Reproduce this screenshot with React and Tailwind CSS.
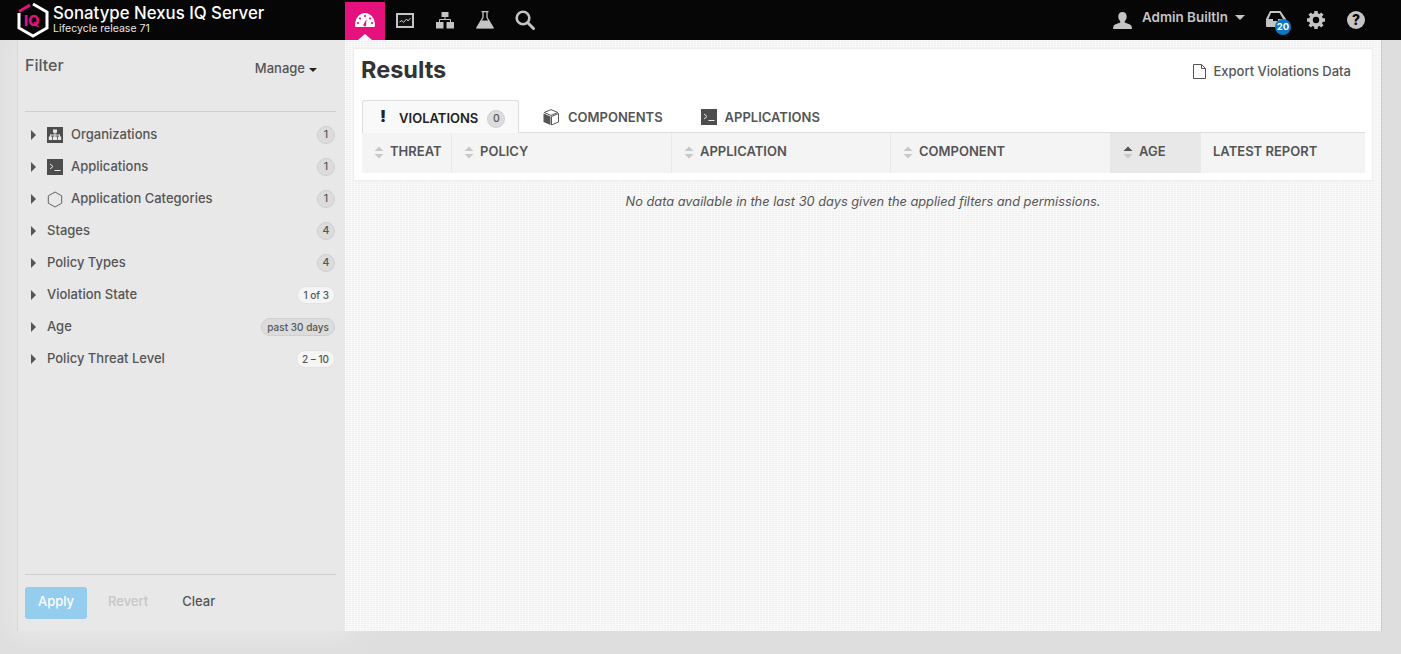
const font = "font-['Inter','Liberation_Sans',sans-serif]";

const Caret = () => (
  <svg width="7" height="10" viewBox="0 0 7 10" className="shrink-0"><path d="M1 0l5 5-5 5z" fill="#555" /></svg>
);

const OrgIcon = () => (
  <svg width="16" height="16" viewBox="0 0 16 16" className="shrink-0">
    <rect width="16" height="16" fill="#4d4d4d" />
    <path d="M6 2.500h4v3.200H8.500V7.500H13V9.500h1.200v3.500h-3.400V9.500H12V8.500H8.500v1H10V13H6V9.500h1.500v-1H4v1h1.200V13H1.800V9.500H3v-2h4.500V5.700H6z" fill="#e8e8e8" />
  </svg>
);

const TermIcon = () => (
  <svg width="16" height="16" viewBox="0 0 16 16" className="shrink-0">
    <rect width="16" height="16" fill="#4d4d4d" />
    <path d="M3 5l3 2.500L3 10" fill="none" stroke="#e8e8e8" strokeWidth="1" />
    <path d="M7.500 11.500h6" stroke="#e8e8e8" strokeWidth="1" />
  </svg>
);

const HexIcon = () => (
  <svg width="16" height="17" viewBox="0 0 16 17" className="shrink-0">
    <path d="M8 1l6.700 3.800v7.400L8 16l-6.700-3.800V4.800z" fill="none" stroke="#555" strokeWidth="0.9" />
  </svg>
);

const Logo = () => (
  <svg width="34" height="38" viewBox="0 0 34 38" className="shrink-0">
    <path d="M17 3l14 8v16l-14 8-14-8V12" fill="none" stroke="#fff" strokeWidth="3" />
    <path d="M3 10.500L14 4" stroke="#e5127d" strokeWidth="3" />
    <text x="8" y="25" fontSize="14.500" fontWeight="800" fill="#e5127d" fontFamily="Inter, sans-serif">IQ</text>
  </svg>
);

const Gauge = () => (
  <svg width="20" height="16" viewBox="0 0 20 16">
    <path d="M0 13.500C0 6 4.500 1 10 1s10 5 10 12.500c0 .8-.5 1.500-1.200 1.500H1.200C.500 15 0 14.300 0 13.500z" fill="#fff" />
    <g fill="#e5127d">
      <circle cx="3" cy="11" r="1.100" />
      <circle cx="5" cy="6.500" r="1.100" />
      <circle cx="10" cy="4" r="1.100" />
      <circle cx="15" cy="6.500" r="1.100" />
      <circle cx="17" cy="11" r="1.100" />
      <path d="M8.500 12.500l3-5.500-.5 6.500a1.300 1.300 0 1 1-2.500-1z" />
    </g>
  </svg>
);

const Chart = () => (
  <svg width="18" height="15" viewBox="0 0 18 15">
    <rect x="1" y="1" width="16" height="13" fill="#111" stroke="#c4c4c4" strokeWidth="2" />
    <path d="M3.500 9l2.500-1.500L7.500 9.500l3-3.500 1.500 2L14.500 5" fill="none" stroke="#c4c4c4" strokeWidth="1" />
  </svg>
);

const Org = () => (
  <svg width="18" height="17" viewBox="0 0 18 17">
    <rect x="5.500" y="0" width="7" height="5" fill="#c4c4c4" />
    <rect x="0" y="10" width="7.500" height="6.500" fill="#c4c4c4" />
    <rect x="10.500" y="10" width="7.500" height="6.500" fill="#c4c4c4" />
    <path d="M9 5v2.500M3.500 10V7.500h11V10" fill="none" stroke="#c4c4c4" strokeWidth="1" />
  </svg>
);

const Flask = () => (
  <svg width="18" height="18" viewBox="0 0 18 18">
    <path d="M5.500 0.700h7M7 1v5.500L1 16.500h16l-6-10V1" fill="none" stroke="#c4c4c4" strokeWidth="1.300" />
    <path d="M5 9.500h8L17.500 17.500H.5z" fill="#c4c4c4" />
  </svg>
);

const Search = () => (
  <svg width="20" height="20" viewBox="0 0 20 20">
    <circle cx="8" cy="8" r="6.300" fill="none" stroke="#c4c4c4" strokeWidth="2.600" />
    <path d="M12.800 12.800l5.700 5.700" stroke="#c4c4c4" strokeWidth="3" strokeLinecap="round" />
  </svg>
);

const User = () => (
  <svg width="19" height="17" viewBox="0 0 19 17">
    <path d="M9.500 0c2.700 0 4.200 2 4.200 4.500 0 2-.8 3.600-1.900 4.600v1.500c2.600 1 6.200 2 6.700 3.400l.500 3H0l.500-3c.5-1.400 4.100-2.400 6.700-3.400V9.100C6.100 8.100 5.300 6.500 5.300 4.500 5.300 2 6.800 0 9.500 0z" fill="#c4c4c4" />
  </svg>
);

const Tray = () => (
  <svg width="20" height="16" viewBox="0 0 20 16">
    <path d="M4 0h10.500L20 8v8H1a1 1 0 0 1-1-1V8z" fill="#c4c4c4" />
    <path d="M5 2h8.500l3.500 6H12v2H7V8H2.500z" fill="#060606" />
  </svg>
);

const Gear = () => (
  <svg width="18" height="18" viewBox="0 0 18 18">
    <circle cx="9" cy="9" r="5.100" fill="none" stroke="#c4c4c4" strokeWidth="3.800" />
    <g stroke="#c4c4c4" strokeWidth="3.400">
      <path d="M9 0v3M9 15v3M0 9h3M15 9h3M2.600 2.600l2.200 2.200M13.200 13.200l2.200 2.200M2.600 15.400l2.200-2.200M13.200 4.800l2.200-2.200" />
    </g>
  </svg>
);

const Page = () => (
  <svg width="13" height="15" viewBox="0 0 13 15" className="shrink-0">
    <path d="M.500.500h8l4 4v10H.500zM8.500.500v4h4" fill="none" stroke="#555" strokeWidth="1" />
  </svg>
);

const Box = () => (
  <svg width="16" height="16" viewBox="0 0 16 16" className="shrink-0">
    <path d="M8 .600l6.800 2.900L8 6.400 1.200 3.500z" fill="none" stroke="#555" strokeWidth="1" />
    <path d="M.500 4.500l7 3v8.500l-7-3z" fill="#555" />
    <path d="M15.500 4.500l-7 3V16l7-3z" fill="none" stroke="#555" strokeWidth="1" />
  </svg>
);

const SortIcon = ({ active }) => (
  <svg width="10" height="13" viewBox="0 0 10 13" className="shrink-0">
    <path d="M5 0.500l4.500 4.500H.500z" fill={active ? '#555' : '#c8c8c8'} />
    <path d="M5 12.500L.500 8h9z" fill="#c8c8c8" />
  </svg>
);

const Badge = ({ children, light, wide }) => (
  <span className={`h-[18px] min-w-[18px] flex items-center justify-center rounded-full border font-medium leading-none text-[#555] ${wide ? 'px-[5px] text-[10px]' : 'text-[10.500px]'} ${light ? 'bg-[#f5f5f5] border-[#e3e3e3]' : 'bg-[#dcdcdc] border-[#cfcfcf]'}`}>
    {children}
  </span>
);

const filters = [
  { label: 'Organizations', icon: <OrgIcon />, badge: '1' },
  { label: 'Applications', icon: <TermIcon />, badge: '1' },
  { label: 'Application Categories', icon: <HexIcon />, badge: '1' },
  { label: 'Stages', badge: '4' },
  { label: 'Policy Types', badge: '4' },
  { label: 'Violation State', badge: '1 of 3', light: true, wide: true },
  { label: 'Age', badge: 'past 30 days', wide: true },
  { label: 'Policy Threat Level', badge: '2 – 10', light: true, wide: true },
];

const columns = [
  { label: 'THREAT', width: 'w-[90px]', sort: true },
  { label: 'POLICY', width: 'w-[220px]', sort: true },
  { label: 'APPLICATION', width: 'w-[219px]', sort: true },
  { label: 'COMPONENT', width: 'w-[220px]', sort: true },
  { label: 'AGE', width: 'w-[90px]', sort: true, active: true },
  { label: 'LATEST REPORT', width: 'flex-1' },
];

const texture = "bg-[#f0f0f0] bg-[repeating-linear-gradient(0deg,rgba(255,255,255,0.55)_0px,rgba(255,255,255,0.55)_1px,transparent_1px,transparent_2px),repeating-linear-gradient(90deg,rgba(255,255,255,0.5)_0px,rgba(255,255,255,0.5)_1px,transparent_1px,transparent_3px)]";

export default function App() {
  return (
    <div className={`h-[654px] w-[1401px] overflow-hidden bg-[#dedede] text-[#555] ${font}`}>
      <header className="relative z-10 h-10 bg-[#060606] flex items-stretch">
        <div className="w-[345px] flex items-center pl-[16px] gap-[3px]">
          <Logo />
          <div className="text-white -mt-[3px]">
            <div className="text-[16.800px] leading-[20px] font-medium">Sonatype Nexus IQ Server</div>
            <div className="text-[10.500px] leading-[12px] text-[#e6e6e6]">Lifecycle release 71</div>
          </div>
        </div>
        <nav className="flex items-stretch">
          <div className="relative w-10 mt-[2px] bg-[#e5127d] flex items-center justify-center pb-[2px]">
            <Gauge />
            <span className="absolute bottom-0 left-[13px] w-0 h-0 border-x-[7px] border-x-transparent border-b-[6px] border-b-white" />
          </div>
          <div className="w-10 flex items-center justify-center"><Chart /></div>
          <div className="w-10 flex items-center justify-center"><Org /></div>
          <div className="w-10 flex items-center justify-center"><Flask /></div>
          <div className="w-10 flex items-center justify-center"><Search /></div>
        </nav>
        <div className="ml-auto flex items-center pr-[36px]">
          <User />
          <span className="ml-[10px] text-[13.400px] font-semibold text-[#c4c4c4] -mt-[6px]">Admin BuiltIn</span>
          <span className="ml-[7px] -mt-[6px] w-0 h-0 border-x-[5px] border-x-transparent border-t-[5px] border-t-[#c4c4c4]" />
          <div className="relative ml-[21px] mt-[-3px]">
            <Tray />
            <span className="absolute left-[9px] top-[8px] w-[16px] h-[16px] rounded-full bg-[#0a78c2] text-white text-[9.500px] font-bold flex items-center justify-center leading-none">20</span>
          </div>
          <div className="ml-[21px]"><Gear /></div>
          <span className="ml-[22px] w-[18px] h-[18px] rounded-full bg-[#c4c4c4] text-[#060606] text-[14px] font-extrabold flex items-center justify-center leading-none">?</span>
        </div>
      </header>

      <div className="h-[591px] ml-[17px] mr-[19px] flex">
        <aside className="w-[328px] shrink-0 flex flex-col bg-[#e8e8e8] border-l border-[#d6d6d6] shadow-[0_0_22px_8px_#e7e7e7] pl-[7px] pr-[9px]">
          <div className="h-[72px] flex items-start justify-between border-b border-[#cfcfcf]">
            <div className="text-[16px] font-medium leading-[20px] mt-[15px] text-[#595959]">Filter</div>
            <div className="flex items-center gap-[4px] mt-[20px] mr-[19px] text-[13px] leading-[17px] font-medium">
              Manage
              <span className="w-0 h-0 mt-[2px] border-x-[4px] border-x-transparent border-t-[4px] border-t-[#222]" />
            </div>
          </div>
          <ul className="flex-1 pt-[7px] pr-[1px]">
            {filters.map((f) => (
              <li key={f.label} className="h-8 flex items-center pl-[5px]">
                <Caret />
                <span className="ml-[10px] flex items-center gap-[8px] text-[13px] font-medium text-[#555]">
                  {f.icon}
                  {f.label}
                </span>
                <span className="ml-auto"><Badge light={f.light} wide={f.wide}>{f.badge}</Badge></span>
              </li>
            ))}
          </ul>
          <div className="h-[57px] border-t border-[#cfcfcf] flex items-start pt-[12px]">
            <button className="w-[62px] h-8 pb-[2px] rounded-[3px] bg-[#94cdee] text-white text-[13px] font-medium">Apply</button>
            <span className="ml-[21px] mt-[5px] text-[13px] font-medium text-[#c6c6c6]">Revert</span>
            <span className="ml-[34px] mt-[5px] text-[13px] font-medium text-[#555]">Clear</span>
          </div>
        </aside>

        <main className={`relative flex-1 border-r border-[#c9c9c9] px-2 pt-2 ${texture}`}>
          <section className="h-[133px] bg-white border border-[#eeeeee] pl-2 pr-[7px]">
            <div className="h-[51px] flex items-start justify-between">
              <h1 className="text-[23.500px] font-bold leading-[30px] mt-[6px] -ml-px text-[#333]">Results</h1>
              <div className="flex items-center gap-[7px] mt-[14px] mr-[14px] text-[13px] leading-[16px] font-medium">
                <Page />
                Export Violations Data
              </div>
            </div>
            <div className="h-[33px] flex items-stretch border-b border-[#dddddd]">
              <div className="w-[157px] -mb-px h-[33px] pt-[4px] bg-[#f9f9f9] border border-b-0 border-[#dddddd] rounded-t-[3px] flex items-center pl-[17px] text-[13px] font-semibold text-[#222]">
                <span className="font-black text-[16px] leading-none mb-[6px]">!</span>
                <span className="ml-[13px]">VIOLATIONS</span>
                <span className="ml-[9px]"><Badge>0</Badge></span>
              </div>
              <div className="ml-[24px] pt-[3px] flex items-center gap-[9px] text-[13px] font-semibold">
                <span className="-mt-[2px]"><Box /></span>
                COMPONENTS
              </div>
              <div className="ml-[38px] pt-[3px] flex items-center gap-[8px] text-[13px] font-semibold">
                <span className="-mt-[2px]"><TermIcon /></span>
                APPLICATIONS
              </div>
            </div>
            <div className="h-10 flex bg-[#f4f4f4]">
              {columns.map((c) => (
                <div
                  key={c.label}
                  className={`${c.width} flex items-center gap-[6px] text-[13px] font-semibold pb-[2px] ${c.active ? 'bg-[#e8e8e8] pl-3' : c.sort ? 'pl-3 border-r border-[#e8e8e8]' : 'pl-3'}`}
                >
                  {c.sort && <SortIcon active={c.active} />}
                  {c.label}
                </div>
              ))}
            </div>
          </section>
          <p className="mt-[11px] text-center text-[12.800px] italic text-[#555]">
            No data available in the last 30 days given the applied filters and permissions.
          </p>
        </main>
      </div>
    </div>
  );
}
